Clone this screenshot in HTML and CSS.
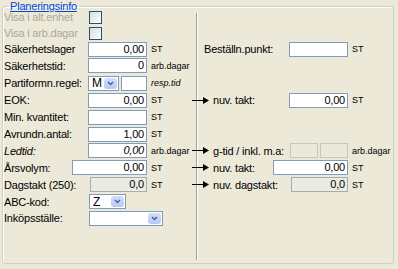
FILE: index.html
```html
<!DOCTYPE html>
<html lang="sv">

<head>
  <meta charset="UTF-8">
  <title>Planeringsinfo</title>
  <link rel="stylesheet" href="styles.css">
</head>

<body>

  <fieldset class="group">
    <legend>Planeringsinfo</legend>
    <div class="grid">

      <div class="row">
        <div class="cell"><span class="lbl fixed off">Visa i alt.enhet</span><span class="check"></span></div>
        <div></div>
        <div></div>
      </div>

      <div class="row">
        <div class="cell"><span class="lbl fixed off">Visa i arb.dagar</span><span class="check"></span></div>
        <div></div>
        <div></div>
      </div>

      <div class="row">
        <div class="cell"><span class="lbl">Säkerhetslager</span><span class="field">0,00</span><span class="unit">ST</span></div>
        <div class="cell right wide"><span class="lbl">Beställn.punkt:</span><span class="field"></span><span class="unit">ST</span></div>
      </div>

      <div class="row">
        <div class="cell"><span class="lbl">Säkerhetstid:</span><span class="field">0</span><span class="unit">arb.dagar</span></div>
        <div></div>
        <div></div>
      </div>

      <div class="row">
        <div class="cell">
          <span class="lbl">Partiformn.regel:</span>
          <span class="combo w-m"><span class="val">M</span><span class="drop"><svg width="7" height="5" viewBox="0 0 7 5"><path d="M1 1 L3.5 3.5 L6 1" fill="none" stroke="#4d6185" stroke-width="1.5"/></svg></span></span>
          <span class="field w-resp"></span>
          <span class="unit it">resp.tid</span>
        </div>
        <div></div>
        <div></div>
      </div>

      <div class="row">
        <div class="cell"><span class="lbl">EOK:</span><span class="field">0,00</span><span class="unit">ST</span></div>
        <div class="mid"><svg class="arrow" width="17" height="9" viewBox="0 0 17 9"><path d="M0 4.5 H11" stroke="#000" stroke-width="1"/><path d="M11 1 L17 4.5 L11 8 Z" fill="#000"/></svg></div>
        <div class="cell right"><span class="lbl">nuv. takt:</span><span class="field">0,00</span><span class="unit">ST</span></div>
      </div>

      <div class="row">
        <div class="cell"><span class="lbl">Min. kvantitet:</span><span class="field"></span><span class="unit">ST</span></div>
        <div></div>
        <div></div>
      </div>

      <div class="row">
        <div class="cell"><span class="lbl">Avrundn.antal:</span><span class="field">1,00</span><span class="unit">ST</span></div>
        <div></div>
        <div></div>
      </div>

      <div class="row">
        <div class="cell"><span class="lbl it">Ledtid:</span><span class="field it">0,00</span><span class="unit">arb.dagar</span></div>
        <div class="mid"><svg class="arrow" width="17" height="9" viewBox="0 0 17 9"><path d="M0 4.5 H11" stroke="#000" stroke-width="1"/><path d="M11 1 L17 4.5 L11 8 Z" fill="#000"/></svg></div>
        <div class="cell right"><span class="lbl">g-tid / inkl. m.a:</span><span class="field ro w-half"></span><span class="field ro w-half gap"></span><span class="unit">arb.dagar</span></div>
      </div>

      <div class="row">
        <div class="cell"><span class="lbl">Årsvolym:</span><span class="field w-year">0,00</span><span class="unit">ST</span></div>
        <div class="mid"><svg class="arrow" width="17" height="9" viewBox="0 0 17 9"><path d="M0 4.5 H11" stroke="#000" stroke-width="1"/><path d="M11 1 L17 4.5 L11 8 Z" fill="#000"/></svg></div>
        <div class="cell right"><span class="lbl">nuv. takt:</span><span class="field w-year">0,00</span><span class="unit">ST</span></div>
      </div>

      <div class="row">
        <div class="cell"><span class="lbl">Dagstakt (250):</span><span class="field dis w-day">0,0</span><span class="unit">ST</span></div>
        <div class="mid"><svg class="arrow" width="17" height="9" viewBox="0 0 17 9"><path d="M0 4.5 H11" stroke="#000" stroke-width="1"/><path d="M11 1 L17 4.5 L11 8 Z" fill="#000"/></svg></div>
        <div class="cell right"><span class="lbl">nuv. dagstakt:</span><span class="field dis w-day">0,0</span><span class="unit">ST</span></div>
      </div>

      <div class="row">
        <div class="cell">
          <span class="lbl fixed">ABC-kod:</span>
          <span class="combo w-abc"><span class="val">Z</span><span class="drop"><svg width="7" height="5" viewBox="0 0 7 5"><path d="M1 1 L3.5 3.5 L6 1" fill="none" stroke="#4d6185" stroke-width="1.5"/></svg></span></span>
        </div>
        <div></div>
        <div></div>
      </div>

      <div class="row">
        <div class="cell">
          <span class="lbl fixed">Inköpsställe:</span>
          <span class="combo w-buy"><span class="val"></span><span class="drop"><svg width="7" height="5" viewBox="0 0 7 5"><path d="M1 1 L3.5 3.5 L6 1" fill="none" stroke="#4d6185" stroke-width="1.5"/></svg></span></span>
        </div>
        <div></div>
        <div></div>
      </div>

    </div>
  </fieldset>

</body>

</html>
```

FILE: styles.css
```css
/* Planeringsinfo, XP-look */
body {
  margin: 0;
  background: #ece9d8;
  font-family: "Liberation Sans", Arial, sans-serif;
  font-size: 11px;
  letter-spacing: -0.2px;
  color: #000;
}

.group {
  margin: 0 4px 0 2px;
  padding: 0;
  border: 1px solid #d0d0bf;
  border-radius: 3px;
  box-shadow: inset 1px 1px 0 #fff;
}

.group legend {
  margin-left: 5px;
  margin-bottom: -4px;
  padding: 0 2px;
  line-height: 13px;
  color: #0046d5;
  text-decoration: underline;
}

.grid {
  display: grid;
  grid-template-columns: 186px 24px 1fr;
  grid-template-rows: 16px 16px 16px 17px 18px 16px 18px 16px 17px 17px 17px 17px 16px 1fr;
  height: 254px;
  /* vertical divider */
  background:
    linear-gradient(#a0a0a0, #a0a0a0) 193px 4px / 1px calc(100% - 7px) no-repeat,
    linear-gradient(#fff, #fff) 194px 4px / 1px calc(100% - 7px) no-repeat;
}

.row {
  display: contents;
}

.cell {
  display: flex;
  align-items: center;
  padding-left: 1px;
  min-width: 0;
}

.cell.right {
  padding-left: 0;
}

.cell.wide {
  grid-column: span 2;
  padding-left: 15px;
}

.mid {
  display: flex;
  align-items: center;
}

.arrow {
  margin-left: 3px;
}

.lbl {
  flex: 1;
  white-space: nowrap;
}

.lbl.fixed {
  flex: 0 0 85px;
}

.off {
  color: #aca899;
}

.it {
  font-style: italic;
}

.check {
  width: 13px;
  height: 13px;
  box-sizing: border-box;
  border: 1px solid #1c5180;
  background: linear-gradient(135deg, #dcdcd7, #fff);
}

.field {
  width: 59px;
  height: 15px;
  box-sizing: border-box;
  border: 1px solid #7f9db9;
  background: #fff;
  text-align: right;
  padding-right: 2px;
  line-height: 13px;
}

.field.dis {
  background: #ebebe4;
  border-color: #a5acb2;
}

.field.ro {
  background: #ece9d8;
  border-color: #c9c7ba;
}

.w-resp {
  width: 26px;
  margin-left: 2px;
}

.w-half {
  width: 28px;
}

.gap {
  margin-left: 2px;
}

.w-year {
  width: 75px;
}

.w-day {
  width: 57px;
}

.unit {
  flex: 0 0 auto;
  width: 38px;
  margin-left: 4px;
  font-size: 9px;
  letter-spacing: 0;
  white-space: nowrap;
}

.right .unit {
  width: 41px;
}

.combo {
  display: flex;
  align-items: center;
  height: 15px;
  box-sizing: border-box;
  border: 1px solid #7f9db9;
  background: #fff;
  padding: 1px;
}

.combo .val {
  flex: 1;
  padding-left: 2px;
  font-size: 12px;
}

.drop {
  display: flex;
  align-items: center;
  justify-content: center;
  width: 13px;
  height: 11px;
  border-radius: 3px;
  background: linear-gradient(#d2defc, #b6c9f7);
}

.w-m {
  width: 31px;
}

.w-abc {
  width: 37px;
}

.w-buy {
  width: 74px;
}
```
